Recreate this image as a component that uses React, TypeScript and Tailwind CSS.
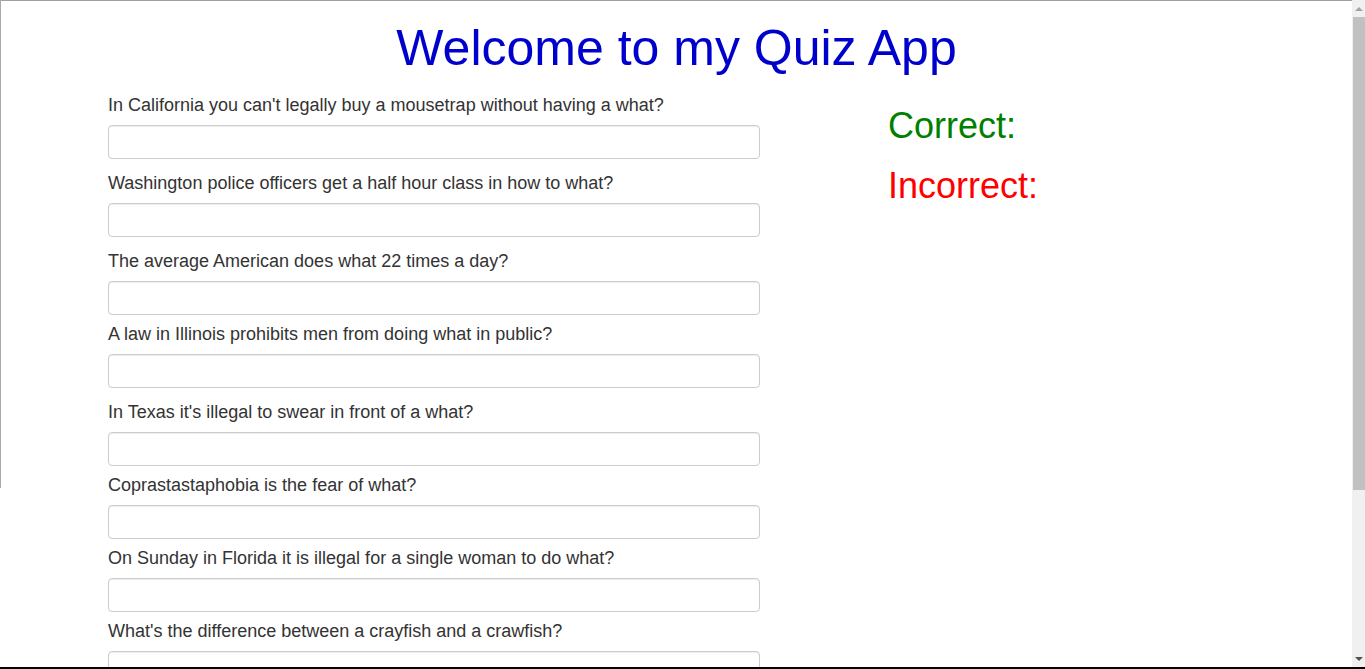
import React from "react";

const questions: { q: string; mt: string }[] = [
  { q: "In California you can't legally buy a mousetrap without having a what?", mt: "mt-0" },
  { q: "Washington police officers get a half hour class in how to what?", mt: "mt-[14px]" },
  { q: "The average American does what 22 times a day?", mt: "mt-[14px]" },
  { q: "A law in Illinois prohibits men from doing what in public?", mt: "mt-[9px]" },
  { q: "In Texas it's illegal to swear in front of a what?", mt: "mt-[14px]" },
  { q: "Coprastastaphobia is the fear of what?", mt: "mt-[9px]" },
  { q: "On Sunday in Florida it is illegal for a single woman to do what?", mt: "mt-[9px]" },
  { q: "What's the difference between a crayfish and a crawfish?", mt: "mt-[9px]" },
];

export default function App() {
  return (
    <div
      className="w-[1365px] h-[669px] flex flex-col overflow-hidden bg-white"
      style={{ fontFamily: '"Liberation Sans", Arial, sans-serif' }}
    >
      <div className="flex flex-1 min-h-0">
        <div className="w-[1px] flex flex-col">
          <div className="h-[488px] bg-[#a9a9a9]" />
        </div>
        <div className="flex-1 flex flex-col min-w-0 border-t border-[#a0a0a0] overflow-hidden">
          <h1 className="text-center text-[50px] leading-[55px] text-[#0000cd] mt-[20px] mb-0 font-normal">
            Welcome to my Quiz App
          </h1>
          <div className="flex pl-[107px] mt-[19px]">
            <div className="w-[652px] flex flex-col shrink-0">
              {questions.map((item, i) => (
                <div key={i} className={`flex flex-col ${item.mt}`}>
                  <label className="text-[18px] leading-[20px] text-[#333333] mb-[10px]">{item.q}</label>
                  <input
                    type="text"
                    className="h-[34px] w-full rounded-[4px] border border-[#cccccc] bg-white px-3 shadow-[inset_0_1px_1px_rgba(0,0,0,0.075)] outline-none"
                  />
                </div>
              ))}
            </div>
            <div className="ml-[128px] flex flex-col pt-[1px]">
              <div className="text-[36px] leading-[60px] text-[#008000]">Correct:</div>
              <div className="text-[36px] leading-[60px] text-[#ff0000]">Incorrect:</div>
            </div>
          </div>
        </div>
        <div className="w-[13px] bg-[#f0f0f0] flex flex-col items-center shrink-0">
          <div className="h-[17px] w-full flex items-center justify-center">
            <div className="w-0 h-0 border-l-[4px] border-r-[4px] border-b-[4px] border-l-transparent border-r-transparent border-b-[#a3a3a3]" />
          </div>
          <div className="h-[473px] w-[12px] ml-[1px] bg-[#c1c1c1]" />
          <div className="flex-1" />
          <div className="h-[17px] w-full flex items-center justify-center">
            <div className="w-0 h-0 border-l-[4px] border-r-[4px] border-t-[4px] border-l-transparent border-r-transparent border-t-[#505050]" />
          </div>
        </div>
      </div>
      <div className="h-[2px] bg-black shrink-0" />
    </div>
  );
}
